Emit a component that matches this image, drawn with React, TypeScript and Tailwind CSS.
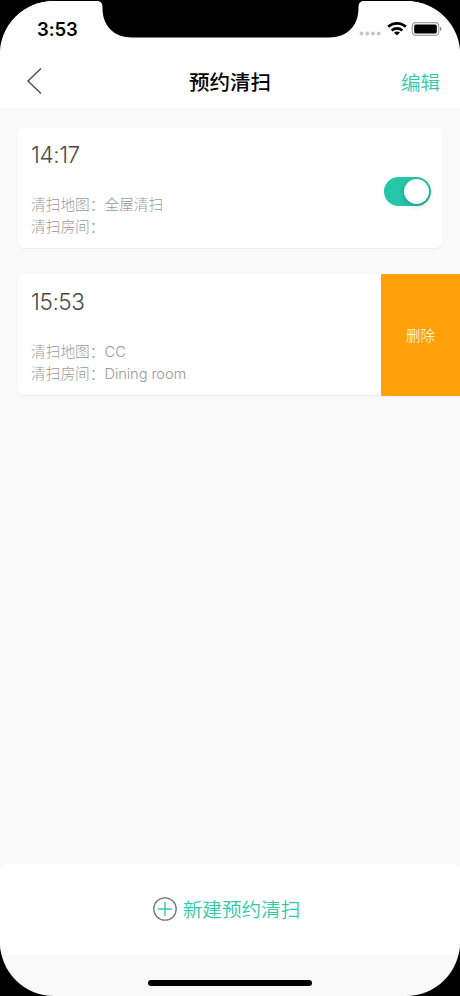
import React, { useState } from 'react';

const schedules = [
  { id: 1, time: '14:17', map: '全屋清扫', rooms: '', swiped: false },
  { id: 2, time: '15:53', map: 'CC', rooms: 'Dining room', swiped: true },
];

const StatusBar = () => (
  <div className="relative flex h-[54px] shrink-0 items-start justify-between bg-white pl-[37px] pr-[18px]">
    <span className="mt-[18px] text-[18.5px] font-semibold leading-[22px] tracking-[-0.1px] text-black">3:53</span>

    {/* Notch */}
    <svg className="absolute left-[97px] top-0" width="267" height="38" viewBox="0 0 267 38">
      <path d="M0 0H267V1C263 1 261.500 3 261.500 8C261.500 26 250 37.500 232 37.500H35C17 37.500 5.500 26 5.500 8C5.500 3 4 1 0 1Z" fill="#000" />
    </svg>

    {/* Signal, wifi, battery */}
    <div className="mt-[21px] flex items-center">
      <svg width="22" height="16" viewBox="0 0 22 16" fill="#c4c4c4">
        <circle cx="2.500" cy="12.500" r="1.900" />
        <circle cx="8.300" cy="12.500" r="1.900" />
        <circle cx="14" cy="12.500" r="1.900" />
        <circle cx="19.700" cy="12.500" r="1.900" />
      </svg>
      <svg className="ml-[6px]" width="20" height="16" viewBox="0 0 20 16" fill="none" stroke="#000" strokeWidth="2.700">
        <path d="M1.200 5.800C6.100 1.100 13.900 1.100 18.800 5.800" />
        <path d="M4.700 9.400C7.700 6.700 12.300 6.700 15.300 9.400" />
        <path d="M10 14.500L7 11.600C8.700 10.100 11.300 10.100 13 11.600Z" fill="#000" stroke="none" />
      </svg>
      <svg className="ml-[4px]" width="31" height="16" viewBox="0 0 31 16">
        <rect x="1.200" y="1.700" width="26.600" height="12.600" rx="3.500" fill="none" stroke="#a3a3a3" strokeWidth="1.200" />
        <rect x="3.200" y="3.500" width="22.600" height="9" rx="1.500" fill="#000" />
        <path d="M29 5.700C31 6.200 31 9.300 29 9.800Z" fill="#8a8a8a" />
      </svg>
    </div>
  </div>
);

const Header = () => (
  <header className="flex h-[54px] shrink-0 items-center justify-between bg-white pl-[26px] pr-5">
    <button className="w-[33px]" aria-label="返回">
      <svg width="17" height="28" viewBox="0 0 17 28" fill="none" stroke="#555" strokeWidth="1.500">
        <path d="M15 1.500L2 14L15 26.500" />
      </svg>
    </button>
    <h1 className="pt-[3px] text-[20.5px] font-medium leading-7 text-black">预约清扫</h1>
    <button className="pt-[3px] text-[19.5px] font-[350] leading-7 text-[#30c9aa]">编辑</button>
  </header>
);

const Toggle = ({ on, onChange }: { on: boolean; onChange: () => void }) => (
  <button
    role="switch"
    aria-checked={on}
    onClick={onChange}
    className={`mt-[6px] flex h-[29px] w-[47px] items-center rounded-full px-[2px] ${on ? 'justify-end bg-[#25c6aa]' : 'justify-start bg-gray-300'}`}
  >
    <span className="size-[25px] rounded-full bg-white shadow-[0_2px_5px_rgba(0,0,0,0.25)]" />
  </button>
);

const App = () => {
  const [enabled, setEnabled] = useState(true);

  return (
    <div className="h-[996px] w-[460px] bg-black pt-px font-['Inter','Noto_Sans_CJK_SC',sans-serif]">
      <div className="-mt-px flex h-[996px] flex-col overflow-hidden rounded-[54px] border-t border-black bg-[#f9f9f9]">
        <div className="-mt-px flex shrink-0 flex-col">
          <StatusBar />
          <Header />
        </div>

        <main className="flex flex-1 flex-col gap-[26px] pt-5">
          {schedules.map((item) => (
            <div key={item.id} className="flex pl-[18px]">
              <div
                className={`flex items-center justify-between bg-white pl-[13px] shadow-[0_1px_2px_rgba(0,0,0,0.06)] ${
                  item.swiped ? 'h-[121px] flex-1 rounded-l-[6px] pt-px' : 'mr-[18px] h-[120px] flex-1 rounded-[6px] pr-[11px]'
                }`}
              >
                <div className="flex h-full flex-col font-light">
                  <span className="mt-[11px] text-[22.5px] leading-8 tracking-[-0.4px] text-[#4a4a4a]">{item.time}</span>
                  <div className="mt-[23px] text-[14.7px] leading-[22px] text-[#999]">
                    <p>清扫地图：{item.map}</p>
                    <p>清扫房间：<span className="tracking-[-0.1px]">{item.rooms}</span></p>
                  </div>
                </div>
                {!item.swiped && <Toggle on={enabled} onChange={() => setEnabled(!enabled)} />}
              </div>
              {item.swiped && (
                <button className="h-[122px] w-[79px] bg-[#ffa10a] pt-[2px] text-[14.5px] font-light text-white">删除</button>
              )}
            </div>
          ))}
        </main>

        <footer className="shrink-0">
          <button className="flex h-[90px] w-full items-center justify-center gap-[6px] rounded-t-[8px] bg-white pr-[7px] text-[19.6px] font-[350] text-[#30c9aa]">
            <svg width="24" height="24" viewBox="0 0 24 24" fill="none">
              <circle cx="12" cy="12" r="11.200" stroke="#777" strokeWidth="1.300" />
              <path d="M12 5V19M5 12H19" stroke="#30c9aa" strokeWidth="1.400" />
            </svg>
            <span className="pt-[3px]">新建预约清扫</span>
          </button>
          <div className="flex h-[42px] justify-center pt-[26px]">
            <div className="h-[6px] w-[164px] rounded-full bg-black" />
          </div>
        </footer>
      </div>
    </div>
  );
};

export default App;
